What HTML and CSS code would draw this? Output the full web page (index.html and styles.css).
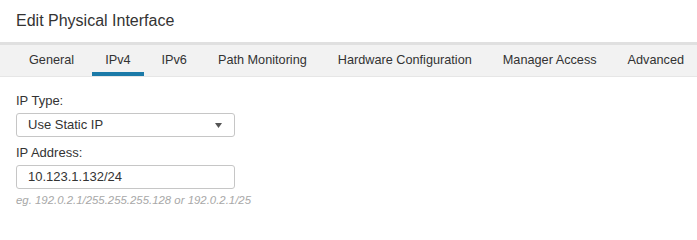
FILE: index.html
```html
<!DOCTYPE html>
<html>
<head>
<meta charset="utf-8">
<link rel="stylesheet" href="styles.css">
</head>
<body>
<div class="dialog">
  <div class="header">Edit Physical Interface</div>
  <div class="tabbar">
    <div class="tab">General</div>
    <div class="tab active">IPv4</div>
    <div class="tab">IPv6</div>
    <div class="tab">Path Monitoring</div>
    <div class="tab">Hardware Configuration</div>
    <div class="tab">Manager Access</div>
    <div class="tab">Advanced</div>
  </div>
  <div class="form">
    <div class="label">IP Type:</div>
    <div class="select">
      <span>Use Static IP</span>
      <svg class="caret" width="7" height="5" viewBox="0 0 7 5"><path d="M0 0H7L3.5 5Z" fill="#555"/></svg>
    </div>
    <div class="label second">IP Address:</div>
    <div class="input">10.123.1.132/24</div>
    <div class="hint">eg. 192.0.2.1/255.255.255.128 or 192.0.2.1/25</div>
  </div>
</div>
</body>
</html>
```
FILE: styles.css
```css
html, body {
  margin: 0;
  padding: 0;
  background: #fff;
}
body {
  font-family: "Liberation Sans", Arial, sans-serif;
  color: #333;
}
.dialog {
  width: 697px;
}
.header {
  height: 42px;
  box-sizing: border-box;
  padding: 11px 16px 0;
  font-size: 16px;
  line-height: 20px;
  color: #333;
}
.tabbar {
  display: flex;
  gap: 5px;
  padding-left: 16px;
  background: #f2f2f2;
  border-top: 3px solid #e0e0e0;
  border-bottom: 1px solid #e6e6e6;
  white-space: nowrap;
}
.tab {
  padding: 7px 13px 4px;
  font-size: 12.7px;
  line-height: 16px;
  color: #333;
  border-bottom: 4px solid transparent;
}
.tab.active {
  border-bottom-color: #1b7aa8;
}
.form {
  padding: 16px 16px 0;
  font-size: 13px;
}
.label {
  line-height: 16px;
  margin-bottom: 4px;
}
.label.second {
  margin-top: 8px;
}
.select, .input {
  width: 219px;
  height: 24px;
  box-sizing: border-box;
  border: 1px solid #c6c6c6;
  border-radius: 3px;
  padding: 0 11px;
  line-height: 22px;
  font-size: 13px;
  color: #333;
}
.select {
  display: flex;
  align-items: center;
  justify-content: space-between;
}
.caret {
  margin-right: 1px;
  margin-top: 1px;
}
.hint {
  margin-top: 4px;
  font-size: 11.4px;
  line-height: 14px;
  font-style: italic;
  color: #a8a8a8;
}
```
